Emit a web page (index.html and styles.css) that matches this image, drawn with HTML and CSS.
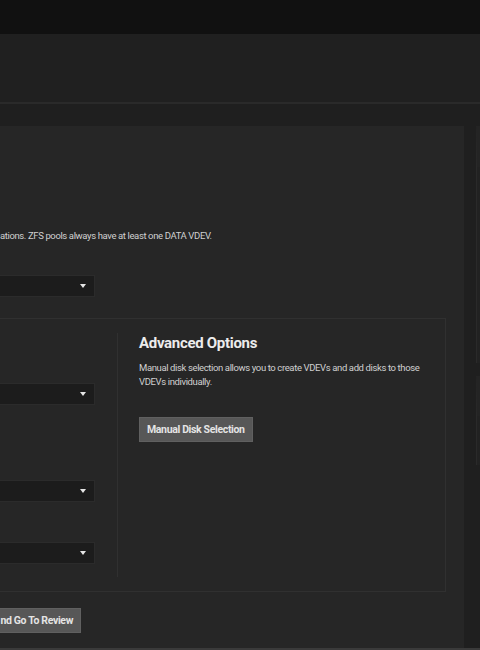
FILE: index.html
```html
<!DOCTYPE html>
<html lang="en">

<head>
    <meta charset="UTF-8">
    <meta name="viewport" content="width=device-width, initial-scale=1.0">
    <title>Pool Creation Wizard</title>
    <link rel="stylesheet" href="styles.css">
</head>

<body>
    <div class="topbar"></div>
    <div class="page-header"></div>

    <div class="main">
        <div class="card">
            <p class="intro">ations. ZFS pools always have at least one DATA VDEV.</p>
            <div class="select"><span class="caret"></span></div>

            <div class="layout-box">
                <div class="auto-col">
                    <div class="select sel-width"><span class="caret"></span></div>
                    <div class="select sel-count"><span class="caret"></span></div>
                    <div class="select sel-vdevs"><span class="caret"></span></div>
                </div>
                <div class="advanced-col">
                    <h3>Advanced Options</h3>
                    <p>Manual disk selection allows you to create VDEVs and add disks to those VDEVs individually.</p>
                    <button class="btn">Manual Disk Selection</button>
                </div>
            </div>

            <button class="btn btn-review">nd Go To Review</button>
        </div>

        <div class="side">
            <div class="side-panel tall"></div>
            <div class="side-panel short"></div>
        </div>
    </div>
    <div class="bottom-line"></div>
</body>

</html>
```

FILE: styles.css
```css
* {
    box-sizing: border-box;
    padding: 0;
    margin: 0;
}

body {
    width: 480px;
    height: 650px;
    overflow: hidden;
    background-color: #1f1f1f;
    font-family: "Roboto", "Noto Sans", sans-serif;
    color: #d4d4d4;
}

.topbar {
    height: 34px;
    background-color: #111;
}

.page-header {
    height: 70px;
    background-color: #202020;
    border-bottom: 2px solid #2a2a2a;
}

.main {
    display: flex;
    gap: 12px;
    height: 544px;
    padding-top: 22px;
}

.card {
    width: 464px;
    flex-shrink: 0;
    background-color: #262626;
    padding-right: 18px;
}

.intro {
    margin-top: 103px;
    font-size: 9.5px;
    line-height: 14px;
    letter-spacing: -0.38px;
    color: #d0d0d0;
}

.select {
    position: relative;
    width: 95px;
    height: 22px;
    margin-top: 32px;
    background-color: #1c1c1c;
    border: 1px solid #2b2b2b;
    border-left: none;
}

/* petit triangle du select */
.caret {
    position: absolute;
    right: 8px;
    top: 8px;
    width: 0;
    height: 0;
    border-left: 3.5px solid transparent;
    border-right: 3.5px solid transparent;
    border-top: 4px solid #e6e6e6;
}

.layout-box {
    display: flex;
    margin-top: 21px;
    height: 274px;
    padding: 14px 0;
    border: 1px solid #303030;
    border-left: none;
}

.auto-col {
    width: 118px;
    padding-right: 22px;
    border-right: 1px solid #303030;
}

.auto-col .sel-width {
    margin-top: 50px;
}

.auto-col .sel-count {
    margin-top: 75px;
}

.auto-col .sel-vdevs {
    margin-top: 40px;
}

.advanced-col {
    flex: 1;
    padding-left: 21px;
}

.advanced-col h3 {
    font-size: 15px;
    line-height: 20px;
    font-weight: 700;
    letter-spacing: -0.3px;
    color: #ececec;
}

.advanced-col p {
    margin-top: 8px;
    font-size: 9.5px;
    line-height: 14px;
    letter-spacing: -0.38px;
    color: #d0d0d0;
    width: 290px;
}

.btn {
    display: block;
    height: 25px;
    padding: 0 7px;
    border: 1px solid #606060;
    background-color: #575757;
    color: #e4e4e4;
    font-family: "Roboto", "Noto Sans", sans-serif;
    font-size: 10.5px;
    font-weight: 700;
    letter-spacing: -0.35px;
    white-space: nowrap;
}

.advanced-col .btn {
    margin-top: 28px;
}

.btn-review {
    margin-top: 16px;
    width: 81px;
    padding: 0 7px 0 0;
    text-align: right;
    border-left: none;
    overflow: hidden;
}

.side {
    flex: 1;
    display: flex;
    flex-direction: column;
    gap: 13px;
}

.side-panel {
    background-color: #222;
    border-left: 1px solid #2a2a2a;
}

.side-panel.tall {
    height: 237px;
    border-top: 41px solid #242424;
}

.side-panel.short {
    height: 89px;
    border-top: 40px solid #242424;
}

.bottom-line {
    height: 2px;
    background-color: #3a3a3a;
}
```
